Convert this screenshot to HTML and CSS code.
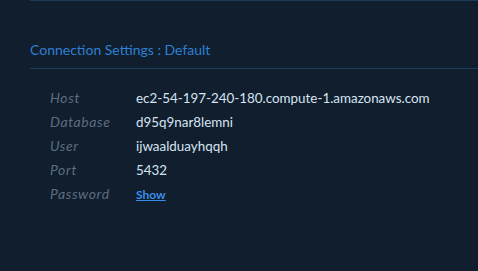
FILE: index.html
```html
<!DOCTYPE html>
<html lang="en">
<head>
<meta charset="UTF-8" />
<title>Connection Settings</title>
<link rel="stylesheet" href="styles.css">
</head>
<body>

<div class="panel">
  <h3 class="panel-title">Connection Settings : Default</h3>
  <dl class="settings">
    <dt>Host</dt>
    <dd>ec2-54-197-240-180.compute-1.amazonaws.com</dd>
    <dt>Database</dt>
    <dd>d95q9nar8lemni</dd>
    <dt>User</dt>
    <dd>ijwaalduayhqqh</dd>
    <dt>Port</dt>
    <dd>5432</dd>
    <dt>Password</dt>
    <dd><a href="#" class="show-link">Show</a></dd>
  </dl>
</div>

</body>
</html>
```

FILE: styles.css
```css
body {
  margin: 0;
  background: #101e2d;
  font-family: Lato, "Open Sans", sans-serif;
  height: 271px;
  overflow: hidden;
}
.panel {
  margin-left: 30px;
  border-top: 1px solid #1d3a5c;
  padding-top: 41px;
}
.panel-title {
  margin: 0;
  padding-bottom: 10px;
  border-bottom: 1px solid #1d3a5c;
  color: #2f80d2;
  font-size: 14px;
  font-weight: 400;
  line-height: 16px;
}
.settings {
  display: grid;
  grid-template-columns: 86px auto;
  row-gap: 8px;
  margin: 21px 0 0 20px;
  font-size: 13.4px;
  line-height: 16px;
}
.settings dt {
  color: #5d6c80;
  font-style: italic;
  font-size: 14px;
  letter-spacing: 0.6px;
}
.settings dd {
  margin: 0;
  color: #d6e4f2;
}
.show-link {
  color: #3a8eea;
  font-size: 12px;
  font-weight: 700;
}
```
